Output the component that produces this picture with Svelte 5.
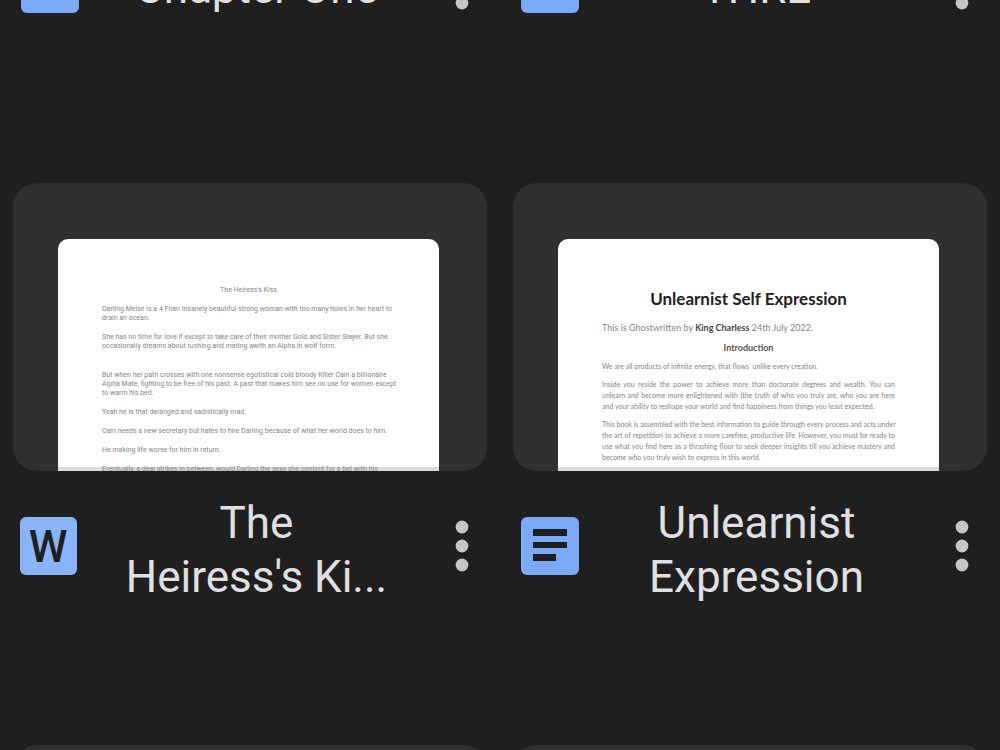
<script lang="ts">
	type Line = { text: string; fill?: boolean; strong?: string; rest?: string };
	type Block = { kind?: string; lines: Line[] };
	type File = { name: string; icon: 'docs' | 'word'; theme: string; blocks: Block[] };

	const files: File[] = [
		{ name: 'Chapter One', icon: 'docs', theme: 'plain', blocks: [] },
		{ name: 'THRE', icon: 'docs', theme: 'plain', blocks: [] },
		{
			name: "The\nHeiress's Ki...",
			icon: 'word',
			theme: 'novel',
			blocks: [
				{ kind: 'center', lines: [{ text: "The Heiress's Kiss" }] },
				{
					lines: [
						{ text: 'Darling Meise is a 4 Fnan insanely beautiful strong woman with too many holes in her heart to' },
						{ text: 'drain an ocean.' }
					]
				},
				{
					kind: 'spaced',
					lines: [
						{ text: 'She has no time for love if except to take care of their mother Gold and Sister Slayer. But she' },
						{ text: 'occasionally dreams about rushing and mating awith an Alpha in wolf form.' }
					]
				},
				{
					lines: [
						{ text: 'But when her path crosses with one nonsense egotistical cold bloody Killer Cain a billionaire' },
						{ text: 'Alpha Mate, fighting to be free of his past. A past that makes him see no use for women except' },
						{ text: 'to warm his bed.' }
					]
				},
				{ lines: [{ text: 'Yeah he is that deranged and sadistically mad.' }] },
				{ lines: [{ text: 'Cain needs a new secretary but hates to hire Darling because of what her world does to him.' }] },
				{ lines: [{ text: 'He making life worse for him in return.' }] },
				{ lines: [{ text: 'Eventually, a deal strikes in between, would Darling the sexy she content for a bet with his' }] }
			]
		},
		{
			name: 'Unlearnist Expression',
			icon: 'docs',
			theme: 'essay',
			blocks: [
				{ kind: 'title', lines: [{ text: 'Unlearnist Self Expression' }] },
				{
					kind: 'byline',
					lines: [{ text: 'This is Ghostwritten by ', strong: 'King Charless', rest: ' 24th July 2022.' }]
				},
				{ kind: 'heading', lines: [{ text: 'Introduction' }] },
				{ lines: [{ text: 'We are all products of infinite energy, that flows  unlike every creation.' }] },
				{
					lines: [
						{ text: 'Inside you reside the power to achieve more than doctorate degrees and wealth. You can', fill: true },
						{ text: 'unlearn and become more enlightened with (the truth of who you truly are, who you are here', fill: true },
						{ text: 'and your ability to reshape your world and find happiness from things you least expected.' }
					]
				},
				{
					lines: [
						{ text: 'This book is assembled with the best information to guide through every process and acts under', fill: true },
						{ text: 'the art of repetition to achieve a more carefree, productive life. However, you must be ready to', fill: true },
						{ text: 'use what you find here as a thrashing floor to seek deeper insights till you achieve mastery and', fill: true },
						{ text: 'become who you truly wish to express in this world.' }
					]
				}
			]
		},
		{ name: 'Untitled document', icon: 'docs', theme: 'plain', blocks: [] },
		{ name: 'Untitled document', icon: 'docs', theme: 'plain', blocks: [] }
	];
</script>

<main>
	<div class="grid">
		{#each files as file}
			<article>
				<div class="preview">
					<div class="sheet {file.theme}">
						{#each file.blocks as block}
							<p class={block.kind}>
								{#each block.lines as line}
									<span class:fill={line.fill}
										>{line.text}{#if line.strong}<b>{line.strong}</b>{line.rest}{/if}</span
									>
								{/each}
							</p>
						{/each}
					</div>
				</div>
				<footer>
					{#if file.icon === 'word'}
						<svg class="icon" viewBox="0 0 58 58" aria-hidden="true">
							<rect width="57" height="58" rx="6" fill="#8ab4f8" />
							<text x="28" y="45" text-anchor="middle">W</text>
						</svg>
					{:else}
						<svg class="icon" viewBox="0 0 58 58" aria-hidden="true">
							<rect x="1" width="58" height="58" rx="6" fill="#7baaf7" />
							<path d="M13 12h34v7H13zM13 25h34v6H13zM13 37h23v7H13z" fill="#1f1f1f" />
						</svg>
					{/if}
					<h2>{file.name}</h2>
					<button type="button" aria-label="More actions for {file.name}">
						<svg viewBox="0 0 14 52" aria-hidden="true">
							<circle cx="7" cy="7" r="6.4" />
							<circle cx="7" cy="26" r="6.4" />
							<circle cx="7" cy="45" r="6.4" />
						</svg>
					</button>
				</footer>
			</article>
		{/each}
	</div>
</main>

<style>
	:global(body) {
		background: #1f1f1f;
	}

	main {
		height: 100vh;
		overflow: hidden;
		font-family: Roboto, 'Noto Sans', sans-serif;
		color: #e0e0e0;
	}

	/* the list is scrolled part way into its first row */
	.grid {
		display: grid;
		grid-template-columns: 1fr 1fr;
		gap: 124px 26px;
		margin-top: -379px;
		padding: 0 13px;
	}

	article {
		min-width: 0;
	}

	.preview {
		height: 288px;
		box-sizing: border-box;
		padding: 56px 48px 0 45px;
		border-radius: 24px;
		background: #303030;
	}

	.sheet {
		height: 232px;
		box-sizing: border-box;
		overflow: hidden;
		padding: 0 44px;
		border-radius: 10px 10px 0 0;
		background: linear-gradient(#fff 228px, #dcdcdc 228px);
		color: #858585;
	}

	.sheet p {
		margin: 0;
	}

	.sheet span {
		display: block;
		white-space: pre;
	}

	.sheet .fill {
		white-space: nowrap;
		text-align-last: justify;
	}

	.novel {
		padding-top: 47px;
		font: 7px/9px Roboto, sans-serif;
	}

	.novel p {
		margin-bottom: 10px;
	}

	.novel .spaced {
		margin-bottom: 20px;
	}

	.center,
	.title,
	.heading {
		text-align: center;
	}

	.essay {
		padding-top: 48px;
		font: 7px/11px Lato, sans-serif;
	}

	.essay p {
		margin-bottom: 7px;
	}

	.essay .title {
		margin-bottom: 11px;
		font-size: 17px;
		font-weight: 700;
		line-height: 24px;
		color: #222;
	}

	.essay .byline {
		margin-bottom: 9px;
		font-size: 9px;
	}

	.essay .byline b {
		color: #444;
	}

	.essay .heading {
		margin-bottom: 8px;
		font-size: 9px;
		font-weight: 700;
		color: #555;
	}

	footer {
		display: flex;
		align-items: center;
		height: 150px;
		padding: 0 16px 0 7px;
	}

	.icon {
		flex: none;
		width: 58px;
		height: 58px;
		overflow: visible;
	}

	.icon text {
		font-size: 44px;
		font-weight: 500;
		fill: #1f1f1f;
	}

	h2 {
		flex: 1;
		margin: 8px 52px 0 34px;
		font-size: 44px;
		font-weight: 400;
		line-height: 54px;
		text-align: center;
		white-space: pre-line;
	}

	button {
		flex: none;
		padding: 0;
		border: 0;
		background: none;
	}

	button svg {
		display: block;
		width: 18px;
		height: 52px;
		fill: #c4c7c5;
	}
</style>
